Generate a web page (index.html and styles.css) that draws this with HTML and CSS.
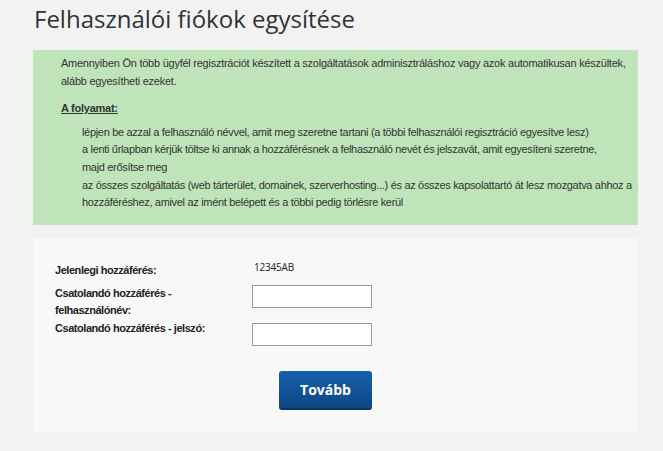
FILE: index.html
```html
<!DOCTYPE html>
<html lang="hu">
<head>
  <meta charset="UTF-8" />
  <meta name="viewport" content="width=device-width, initial-scale=1.0"/>
  <title>Felhasználói fiókok egysítése</title>
  <link rel="stylesheet" href="styles.css">
</head>
<body>
  <h1>Felhasználói fiókok egysítése</h1>

  <div class="info">
    <p>Amennyiben Ön több ügyfél regisztrációt készített a szolgáltatások adminisztráláshoz vagy azok automatikusan készültek, alább egyesítheti ezeket.</p>
    <p class="folyamat">A folyamat:</p>
    <ul class="lepesek">
      <li>lépjen be azzal a felhasználó névvel, amit meg szeretne tartani (a többi felhasználói regisztráció egyesítve lesz)</li>
      <li>a lenti űrlapban kérjük töltse ki annak a hozzáférésnek a felhasználó nevét és jelszavát, amit egyesíteni szeretne,<br>majd erősítse meg</li>
      <li>az összes szolgáltatás (web tárterület, domainek, szerverhosting...) és az összes kapsolattartó át lesz mozgatva ahhoz a hozzáféréshez, amivel az imént belépett és a többi pedig törlésre kerül</li>
    </ul>
  </div>

  <form class="urlap">
    <label class="cimke sor1">Jelenlegi hozzáférés:</label>
    <div class="ertek sor1">12345AB</div>

    <label class="cimke" for="felhasznalo">Csatolandó hozzáférés - felhasználónév:</label>
    <input type="text" id="felhasznalo">

    <label class="cimke sor3" for="jelszo">Csatolandó hozzáférés - jelszó:</label>
    <input type="password" id="jelszo">

    <button type="button" class="tovabb">Tovább</button>
  </form>
</body>
</html>
```

FILE: styles.css
```css
body { margin: 0; padding: 0 25px 0 33px; background: #f2f2f2; font-family: "Liberation Sans", Arial, sans-serif; color: #333; }
h1 { margin: 0; padding: 3px 0 0 1px; height: 47px; box-sizing: border-box; font-family: "Open Sans", sans-serif; font-weight: 400; font-size: 24px; line-height: 32px; color: #333; }

.info { margin-top: 3px; background: #bfe4b9; padding: 5px 2px 13px 28px; font-size: 11px; line-height: 17.6px; letter-spacing: -0.25px; }
.info p { margin: 0; }
.folyamat { margin-top: 10px !important; font-weight: bold; text-decoration: underline; }
.lepesek { list-style: none; margin: 6px 0 0; padding: 0 0 0 21px; letter-spacing: -0.32px; }

.urlap { margin-top: 13px; background: #f8f8f8; padding: 24px 22px 22px; display: grid; grid-template-columns: 175px 120px; column-gap: 22px; row-gap: 4px; align-items: start; }
.cimke { font-size: 11px; font-weight: bold; line-height: 17px; letter-spacing: -0.45px; color: #222; }
.sor1 { margin-bottom: 2px; }
.ertek { font-family: "Open Sans", sans-serif; font-size: 10px; letter-spacing: -0.2px; line-height: 17px; margin: -3px 0 0 2px; color: #222; }
.sor3 { margin-top: -3px; }
.urlap input { width: 120px; height: 23px; box-sizing: border-box; border: 1px solid #999; background: #fff; margin: 0; }
.tovabb { grid-column: 2; justify-self: end; margin-top: 21px; width: 93px; height: 39px; border: 0; border-bottom: 2px solid #083766; border-radius: 3px; background: linear-gradient(#1860ad, #0c4785); color: #fff; font-family: "Open Sans", sans-serif; font-weight: bold; font-size: 14px; }
```
